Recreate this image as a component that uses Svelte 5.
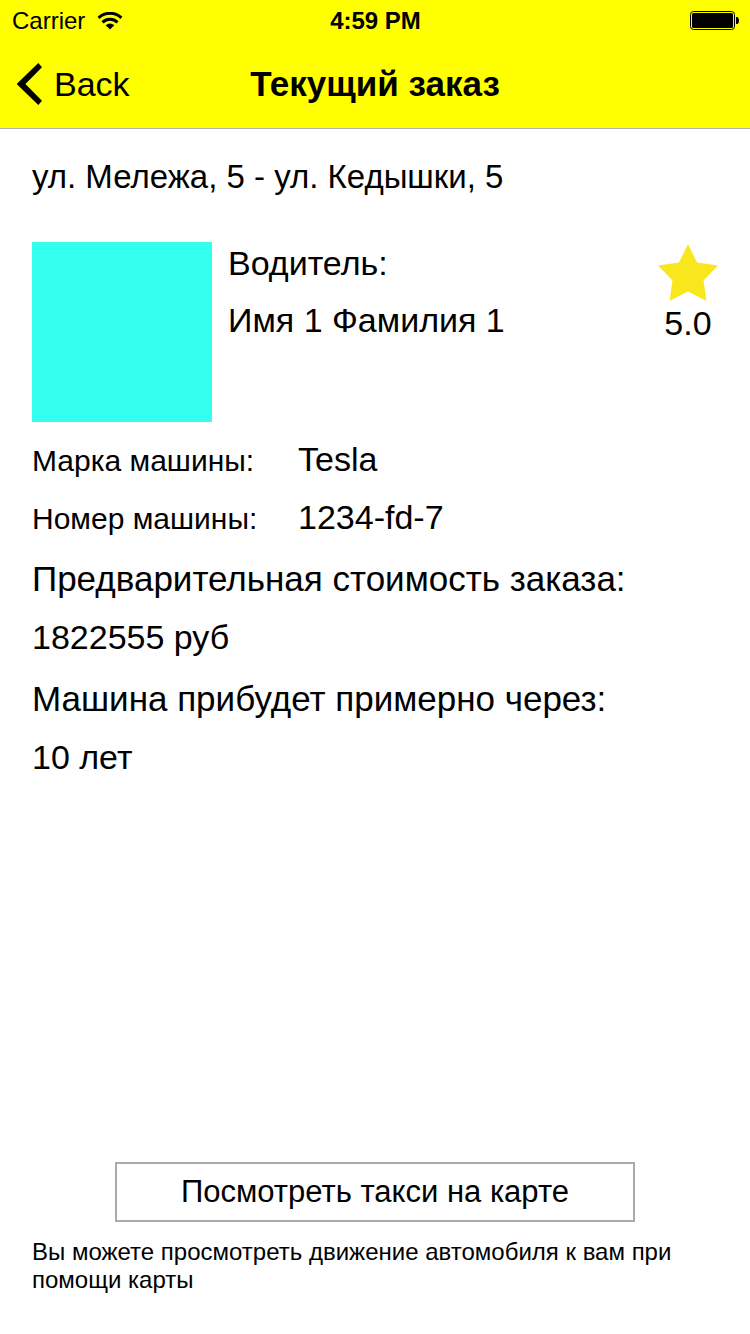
<script>
  const order = {
    route: 'ул. Мележа, 5 - ул. Кедышки, 5',
    driver: 'Имя 1 Фамилия 1',
    rating: '5.0',
    brand: 'Tesla',
    plate: '1234-fd-7',
    price: '1822555 руб',
    arrival: '10 лет'
  };
</script>

<div class="screen">
  <header>
    <div class="status">
      <div class="carrier">
        <span>Carrier</span>
        <svg width="26" height="18" viewBox="0 0 26 18" aria-hidden="true">
          <g fill="none" stroke="#000" stroke-width="3">
            <path d="M1.600 5.900a16.500 16.500 0 0 1 22.800 0" />
            <path d="M5.500 10.300a11 11 0 0 1 15 0" />
          </g>
          <path d="M8.700 13.200a6.400 6.400 0 0 1 8.600 0L13 17.600z" />
        </svg>
      </div>
      <strong class="time">4:59 PM</strong>
      <svg class="battery" width="49" height="19" viewBox="0 0 49 19" aria-hidden="true">
        <rect x="0.5" y="0.5" width="44" height="18" rx="3" fill="none" stroke="#000" />
        <rect x="2" y="2" width="41" height="15" rx="1.500" />
        <path d="M46 6h1.500q1.500 1 1.500 3.500T47.500 13H46z" />
      </svg>
    </div>
    <nav>
      <button class="back" type="button">
        <svg width="26" height="42" viewBox="0 0 26 42" aria-hidden="true">
          <path d="M22.300 0L26 4.200 9.400 21 26 37.800 22.300 42 .7 21z" />
        </svg>
        <span>Back</span>
      </button>
      <h1>Текущий заказ</h1>
    </nav>
  </header>

  <main>
    <p class="route">{order.route}</p>

    <section class="driver">
      <div class="photo"></div>
      <div class="name">
        <p>Водитель:</p>
        <p>{order.driver}</p>
      </div>
      <div class="rating">
        <svg width="60" height="58" viewBox="0 0 60 58" aria-hidden="true">
          <path fill="#f8e71c" d="M30 0L39 18.500 60 21.500 45.500 36.500 48.500 57 30 47.500 11.500 57 14.500 36.500 0 21.500 21 18.500z" />
        </svg>
        <span>{order.rating}</span>
      </div>
    </section>

    <dl class="car">
      <dt>Марка машины:</dt>
      <dd>{order.brand}</dd>
      <dt>Номер машины:</dt>
      <dd>{order.plate}</dd>
    </dl>

    <dl class="facts">
      <div>
        <dt>Предварительная стоимость заказа:</dt>
        <dd>{order.price}</dd>
      </div>
      <div>
        <dt>Машина прибудет примерно через:</dt>
        <dd>{order.arrival}</dd>
      </div>
    </dl>
  </main>

  <footer>
    <button class="map" type="button">Посмотреть такси на карте</button>
    <p>Вы можете просмотреть движение автомобиля к вам при помощи карты</p>
  </footer>
</div>

<style>
  :global(body) {
    margin: 0;
    background: #fff;
  }
  .screen {
    display: flex;
    flex-direction: column;
    min-height: 100vh;
    box-sizing: border-box;
    font-family: "Liberation Sans", Arial, sans-serif;
    font-size: 34px;
    line-height: 40px;
    color: #000;
  }
  p, h1, dl, dd {
    margin: 0;
  }
  svg {
    display: block;
    flex: none;
  }
  button {
    font: inherit;
    color: inherit;
    cursor: pointer;
  }
  header {
    background: #ff0;
    border-bottom: 1px solid #b2b2b2;
  }
  .status,
  nav {
    display: grid;
    grid-template-columns: 1fr auto 1fr;
    align-items: center;
  }
  .status {
    height: 41px;
    padding: 0 11px 0 12px;
    font-size: 24px;
  }
  .carrier {
    display: flex;
    align-items: center;
    gap: 12px;
  }
  .battery {
    justify-self: end;
  }
  nav {
    height: 86px;
    padding: 0 16px 1px;
  }
  .back {
    display: flex;
    align-items: center;
    justify-self: start;
    gap: 12px;
    padding: 0;
    border: 0;
    background: none;
  }
  h1 {
    font-size: 35px;
  }
  main {
    flex: 1;
    padding: 28px 32px;
  }
  .route {
    font-size: 33px;
  }
  .driver {
    display: flex;
    gap: 16px;
    margin-top: 45px;
  }
  .photo {
    width: 180px;
    height: 180px;
    background: #32ffee;
  }
  .name {
    display: flex;
    flex: 1;
    flex-direction: column;
    gap: 17px;
    padding-top: 1px;
  }
  .rating {
    display: flex;
    flex-direction: column;
    align-items: center;
    gap: 1px;
    padding-top: 2px;
  }
  .car {
    display: grid;
    grid-template-columns: 250px 1fr;
    grid-auto-rows: 40px;
    align-items: baseline;
    gap: 18px 16px;
    margin-top: 17px;
  }
  .car dt {
    font-size: 30px;
  }
  .facts {
    display: grid;
    gap: 22px;
    margin-top: 22px;
  }
  .facts div {
    display: grid;
    gap: 18px;
  }
  .facts dt {
    font-size: 35px;
  }
  footer {
    display: flex;
    flex-direction: column;
    padding: 0 32px 40px;
  }
  .map {
    width: 520px;
    max-width: 100%;
    height: 60px;
    align-self: center;
    border: 2px solid #aaa;
    background: #fff;
    font-size: 31px;
  }
  footer p {
    margin-top: 16px;
    font-size: 24px;
    line-height: 28px;
  }
</style>
